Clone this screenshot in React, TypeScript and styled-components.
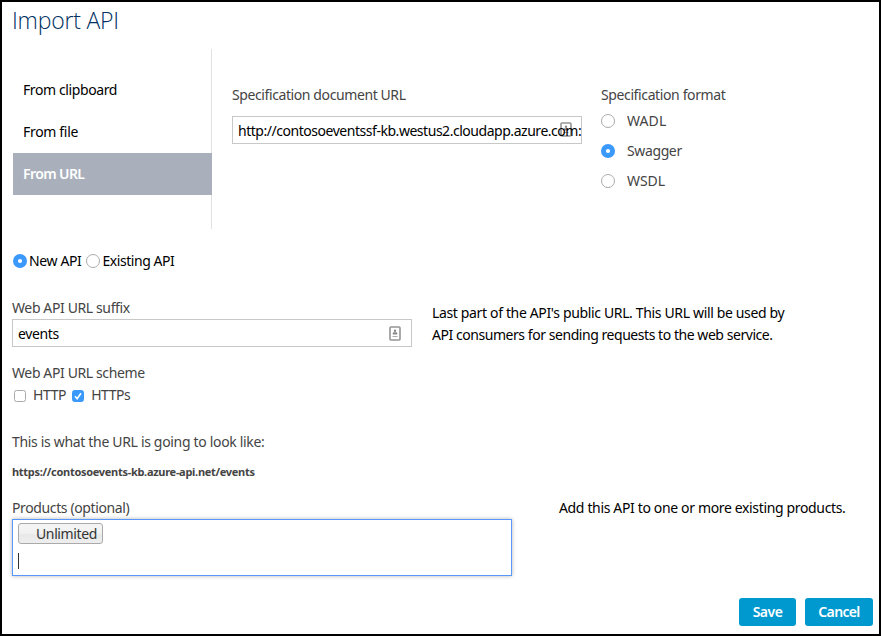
import React, { useState } from 'react';
import styled, { createGlobalStyle, css } from 'styled-components';

const GlobalStyle = createGlobalStyle`
  * { box-sizing: border-box; }
  body {
    margin: 0;
    background: #fff;
    color: #000;
    font-family: 'Noto Sans', 'Open Sans', sans-serif;
    font-size: 14px;
    line-height: 22px;
  }
`;

const Dialog = styled.main`
  display: flex;
  flex-direction: column;
  width: 881px;
  height: 636px;
  padding-left: 10px;
  border: 2px solid #000;
  overflow: hidden;
`;

const Title = styled.h1`
  margin: 0;
  height: 47px;
  font-family: 'Open Sans', 'Noto Sans', sans-serif;
  font-size: 23px;
  font-weight: 300;
  line-height: 37px;
  letter-spacing: -0.2px;
  color: #00305f;
`;

const Text = styled.span<{ $track?: number; $muted?: boolean }>`
  white-space: nowrap;
  letter-spacing: ${(p) => p.$track ?? -0.38}px;
  ${(p) => p.$muted && css`color: #444;`}
`;

const Source = styled.section`
  display: flex;
  height: 180px;
`;

const Tabs = styled.nav`
  width: 200px;
  margin-right: 20px;
  padding: 20px 0 0 1px;
  border-right: 1px solid #e0e1e3;
`;

const Tab = styled.div<{ $active?: boolean }>`
  height: 42px;
  margin-right: -1px;
  padding-left: 10px;
  line-height: 42px;
  cursor: pointer;
  ${(p) => p.$active && css`
    background: #a9b0bc;
    color: #fff;
    font-weight: 600;
  `}
`;

const SpecColumn = styled.div<{ $width: number }>`
  display: flex;
  flex-direction: column;
  width: ${(p) => p.$width}px;
  padding-top: 35px;
`;

const Field = styled.div<{ $width: number; $gap?: number }>`
  display: flex;
  align-items: center;
  justify-content: space-between;
  width: ${(p) => p.$width}px;
  height: 28px;
  margin-top: ${(p) => p.$gap ?? 0}px;
  padding: 1px 10px 0 5px;
  border: 1px solid #c8c8c8;
  line-height: 26px;
  overflow: hidden;
`;

const FieldText = styled(Text)`
  z-index: 1;
`;

const FieldIcon = styled.svg<{ $overlap?: boolean }>`
  flex: none;
  width: 12px;
  height: 15px;
  margin-top: -1px;
  ${(p) => p.$overlap && css`margin: -2px -1px 0 -22px;`}
`;

const FormatRow = styled.label`
  display: flex;
  align-items: center;
  gap: 12px;
  height: 30px;
  color: #444;
`;

const RadioMark = styled.svg`
  flex: none;
  width: 14px;
  height: 14px;
`;

const ApiChoice = styled.div`
  display: flex;
  gap: 5px;
  height: 22px;
  margin-top: 21px;
  padding-left: 1px;
`;

const ChoiceLabel = styled.label`
  display: flex;
  align-items: center;
  gap: 2px;
`;

const Suffix = styled.section`
  display: flex;
  gap: 20px;
  height: 65px;
  margin-top: 25px;
`;

const Stack = styled.div<{ $top?: number }>`
  display: flex;
  flex-direction: column;
  padding-top: ${(p) => p.$top ?? 0}px;
`;

const Schemes = styled.div`
  display: flex;
  gap: 6px;
  padding-left: 2px;
`;

const SchemeLabel = styled.label`
  display: flex;
  align-items: center;
  gap: 7px;
  color: #444;
`;

const CheckMark = styled.svg`
  flex: none;
  width: 12px;
  height: 12px;
  margin-top: 2px;
`;

const Preview = styled.section`
  display: flex;
  flex-direction: column;
  gap: 8px;
  height: 66px;
  margin-top: 25px;
  color: #444;
`;

const Url = styled(Text)`
  font-size: 11px;
  font-weight: 700;
`;

const Products = styled.section`
  display: flex;
  gap: 47px;
  height: 79px;
`;

const TokenBox = styled.div`
  display: flex;
  flex-direction: column;
  align-items: flex-start;
  width: 500px;
  height: 57px;
  padding: 3px 5px;
  border: 1px solid #5897fb;
  box-shadow: 0 0 4px rgba(0, 0, 0, 0.3);
`;

const Token = styled.div`
  display: flex;
  width: 85px;
  height: 21px;
  padding-left: 17px;
  border: 1px solid #aaa;
  border-radius: 3px;
  background: linear-gradient(#f4f4f4 20%, #f0f0f0 50%, #e8e8e8 52%, #eee);
  color: #333;
  line-height: 20px;
`;

const Caret = styled.div`
  width: 1px;
  height: 16px;
  margin-top: 9px;
  background: #333;
`;

const Actions = styled.footer`
  display: flex;
  justify-content: flex-end;
  gap: 9px;
  margin: 22px 6px 0 0;
`;

const Button = styled.button<{ $width: number }>`
  width: ${(p) => p.$width}px;
  height: 28px;
  padding: 0;
  border: 0;
  border-radius: 3px;
  background: #0099cf;
  color: #fff;
  font: 600 14px/28px 'Noto Sans', 'Open Sans', sans-serif;
`;

function Radio({ on }: { on: boolean }) {
  return (
    <RadioMark viewBox="0 0 14 14">
      {on ? (
        <>
          <circle cx="7" cy="7" r="7" fill="#3b99fc" />
          <circle cx="7" cy="7" r="2.1" fill="#fff" />
        </>
      ) : (
        <circle cx="7" cy="7" r="6.5" fill="#fff" stroke="#aaa" />
      )}
    </RadioMark>
  );
}

function Check({ on }: { on: boolean }) {
  return (
    <CheckMark viewBox="0 0 12 12">
      <rect x=".5" y=".5" width="11" height="11" rx="2" fill={on ? '#3b99fc' : '#fff'} stroke={on ? '#3b99fc' : '#aaa'} />
      {on && <path d="M3 6.3 5.1 8.7 9 3.2" fill="none" stroke="#fff" strokeWidth="1.6" />}
    </CheckMark>
  );
}

function ContactIcon({ overlap }: { overlap?: boolean }) {
  return (
    <FieldIcon $overlap={overlap} viewBox="0 0 12 15">
      <rect x="1" y="1" width="10" height="13" rx="1" fill="#fff" stroke="#949494" strokeWidth="1.6" />
      <circle cx="6" cy="4.8" r="1.2" fill="#888" />
      <path d="M3.8 8.4V7.3q0-1 1-1h2.4q1 0 1 1v1.1z" fill="#888" />
      <path d="M3.5 10.5h5" stroke="#aaa" />
    </FieldIcon>
  );
}

const tabs: [string, number][] = [['From clipboard', -0.4], ['From file', -0.32], ['From URL', -0.6]];
const formats: [string, number][] = [['WADL', 0.1], ['Swagger', -0.38], ['WSDL', -0.1]];

export default function App() {
  const [tab, setTab] = useState('From URL');
  const [format, setFormat] = useState('Swagger');
  const [kind, setKind] = useState('new');

  return (
    <>
      <GlobalStyle />
      <Dialog>
        <Title>Import API</Title>
        <Source>
          <Tabs>
            {tabs.map(([name, track]) => (
              <Tab key={name} $active={tab === name} onClick={() => setTab(name)}>
                <Text $track={track}>{name}</Text>
              </Tab>
            ))}
          </Tabs>
          <SpecColumn $width={369}>
            <Text $muted $track={-0.4}>Specification document URL</Text>
            <Field $width={350} $gap={10}>
              <FieldText $track={-0.465}>http://contosoeventssf-kb.westus2.cloudapp.azure.com:</FieldText>
              <ContactIcon overlap />
            </Field>
          </SpecColumn>
          <SpecColumn $width={200}>
            <Text $muted $track={-0.38}>Specification format</Text>
            {formats.map(([name, track]) => (
              <FormatRow key={name} onClick={() => setFormat(name)}>
                <Radio on={format === name} />
                <Text $track={track}>{name}</Text>
              </FormatRow>
            ))}
          </SpecColumn>
        </Source>

        <ApiChoice>
          <ChoiceLabel onClick={() => setKind('new')}>
            <Radio on={kind === 'new'} />
            <Text>New API</Text>
          </ChoiceLabel>
          <ChoiceLabel onClick={() => setKind('existing')}>
            <Radio on={kind === 'existing'} />
            <Text $track={-0.44}>Existing API</Text>
          </ChoiceLabel>
        </ApiChoice>

        <Suffix>
          <Stack>
            <Text $muted>Web API URL suffix</Text>
            <Field $width={400}>
              <FieldText>events</FieldText>
              <ContactIcon />
            </Field>
          </Stack>
          <Stack $top={5}>
            <Text $track={-0.35}>Last part of the API's public URL. This URL will be used by</Text>
            <Text $track={-0.45}>API consumers for sending requests to the web service.</Text>
          </Stack>
        </Suffix>

        <Stack>
          <Text $muted>Web API URL scheme</Text>
          <Schemes>
            <SchemeLabel><Check on={false} /><Text>HTTP</Text></SchemeLabel>
            <SchemeLabel><Check on /><Text $track={-0.48}>HTTPs</Text></SchemeLabel>
          </Schemes>
        </Stack>

        <Preview>
          <Text $track={-0.325}>This is what the URL is going to look like:</Text>
          <Url $track={-0.29}>https://contosoevents-kb.azure-api.net/events</Url>
        </Preview>

        <Products>
          <Stack>
            <Text $muted>Products (optional)</Text>
            <TokenBox>
              <Token><Text>Unlimited</Text></Token>
              <Caret />
            </TokenBox>
          </Stack>
          <Text $track={-0.35}>Add this API to one or more existing products.</Text>
        </Products>

        <Actions>
          <Button $width={57}><Text $track={-0.5}>Save</Text></Button>
          <Button $width={68}><Text $track={-0.65}>Cancel</Text></Button>
        </Actions>
      </Dialog>
    </>
  );
}
